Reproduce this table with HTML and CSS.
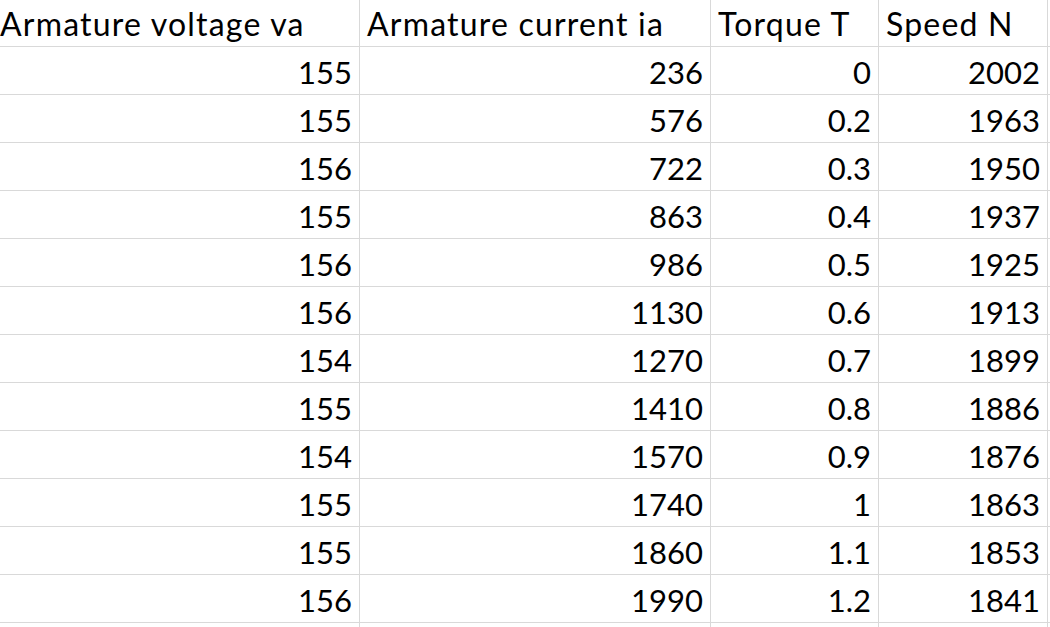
FILE: index.html
```html
<!DOCTYPE html>
<html>
<head>
<meta charset="utf-8">
<link rel="stylesheet" href="styles.css">
</head>
<body>
<div class="sheet">
<table class="grid">
<colgroup><col class="ca"><col class="cb"><col class="cc"><col class="cd"><col class="ce"></colgroup>
<tr class="head"><td>Armature voltage va</td><td>Armature current ia</td><td>Torque T</td><td>Speed N</td><td></td></tr>
<tr><td class="n">155</td><td class="n">236</td><td class="n">0</td><td class="n">2002</td><td></td></tr>
<tr><td class="n">155</td><td class="n">576</td><td class="n">0.2</td><td class="n">1963</td><td></td></tr>
<tr><td class="n">156</td><td class="n">722</td><td class="n">0.3</td><td class="n">1950</td><td></td></tr>
<tr><td class="n">155</td><td class="n">863</td><td class="n">0.4</td><td class="n">1937</td><td></td></tr>
<tr><td class="n">156</td><td class="n">986</td><td class="n">0.5</td><td class="n">1925</td><td></td></tr>
<tr><td class="n">156</td><td class="n">1130</td><td class="n">0.6</td><td class="n">1913</td><td></td></tr>
<tr><td class="n">154</td><td class="n">1270</td><td class="n">0.7</td><td class="n">1899</td><td></td></tr>
<tr><td class="n">155</td><td class="n">1410</td><td class="n">0.8</td><td class="n">1886</td><td></td></tr>
<tr><td class="n">154</td><td class="n">1570</td><td class="n">0.9</td><td class="n">1876</td><td></td></tr>
<tr><td class="n">155</td><td class="n">1740</td><td class="n">1</td><td class="n">1863</td><td></td></tr>
<tr><td class="n">155</td><td class="n">1860</td><td class="n">1.1</td><td class="n">1853</td><td></td></tr>
<tr><td class="n">156</td><td class="n">1990</td><td class="n">1.2</td><td class="n">1841</td><td></td></tr>
<tr><td></td><td></td><td></td><td></td><td></td></tr>
</table>
</div>
</body>
</html>
```
FILE: styles.css
```css
html, body {
  margin: 0;
  padding: 0;
  background: #ffffff;
  overflow: hidden;
}
.sheet {
  width: 1050px;
  height: 627px;
  overflow: hidden;
}
.grid {
  width: 1115px;
  border-collapse: collapse;
  table-layout: fixed;
  margin-left: -8px;
  margin-top: -2px;
  font-family: "Lato", "Liberation Sans", sans-serif;
  font-size: 31px;
  color: #000;
}
.ca { width: 367px; }
.cb { width: 351px; }
.cc { width: 168px; }
.cd { width: 169px; }
.ce { width: 60px; }
.grid td {
  height: 48px;
  padding: 0 7px 4px 7px;
  border: 1px solid #d9d9d9;
  vertical-align: bottom;
  white-space: nowrap;
  line-height: 36px;
  box-sizing: border-box;
}
.grid td.n {
  text-align: right;
}
.grid .head td {
  font-size: 32px;
  letter-spacing: 1.2px;
}
```
